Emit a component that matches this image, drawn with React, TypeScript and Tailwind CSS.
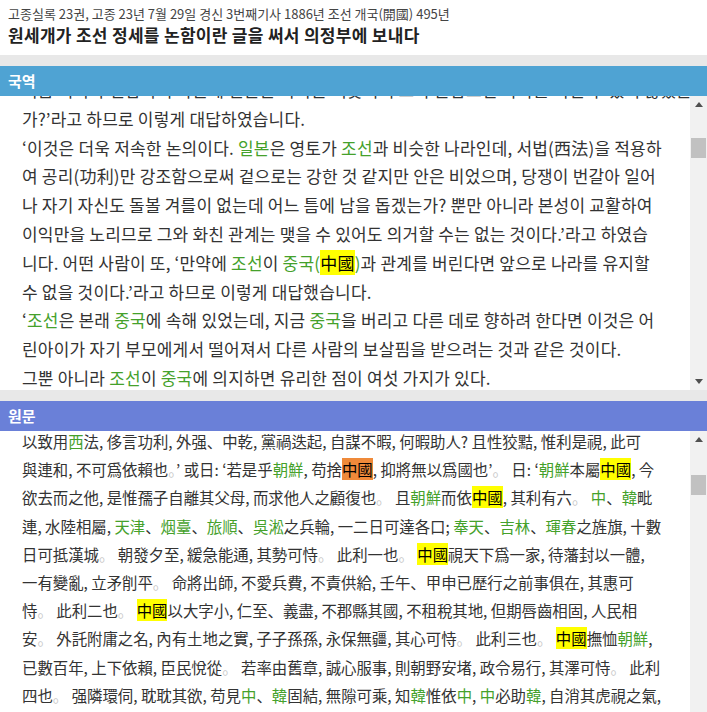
import React from "react";

type Seg = string | { t: string; c: "g" | "y" | "o" | "p" };

const G = (t: string): Seg => ({ t, c: "g" });
const Y = (t: string): Seg => ({ t, c: "y" });
const O = (t: string): Seg => ({ t, c: "o" });
const P: Seg = { t: "。", c: "p" };

function Line({ segs }: { segs: Seg[] }) {
  return (
    <div className="whitespace-nowrap">
      {segs.map((s, i) => {
        if (typeof s === "string") return <span key={i}>{s}</span>;
        if (s.c === "g") return <span key={i} className="text-[#45a12b]">{s.t}</span>;
        if (s.c === "y") return <span key={i} className="bg-[#ffff00] text-black">{s.t}</span>;
        if (s.c === "o") return <span key={i} className="bg-[#ef8a3a] text-black">{s.t}</span>;
        return <span key={i} className="text-[#c8c8c8]">{s.t}</span>;
      })}
    </div>
  );
}

const koLines: Seg[][] = [
  ["지금 외국과 연합하려 하는데 일본은 가까운 이웃이니 그와 손잡으면 나라를 지킬 수 있지 않겠는"],
  ["가?’라고 하므로 이렇게 대답하였습니다."],
  ["‘이것은 더욱 저속한 논의이다. ", G("일본"), "은 영토가 ", G("조선"), "과 비슷한 나라인데, 서법(西法)을 적용하"],
  ["여 공리(功利)만 강조함으로써 겉으로는 강한 것 같지만 안은 비었으며, 당쟁이 번갈아 일어"],
  ["나 자기 자신도 돌볼 겨를이 없는데 어느 틈에 남을 돕겠는가? 뿐만 아니라 본성이 교활하여"],
  ["이익만을 노리므로 그와 화친 관계는 맺을 수 있어도 의거할 수는 없는 것이다.’라고 하였습"],
  ["니다. 어떤 사람이 또, ‘만약에 ", G("조선"), "이 ", G("중국("), Y("中國"), G(")"), "과 관계를 버린다면 앞으로 나라를 유지할"],
  ["수 없을 것이다.’라고 하므로 이렇게 대답했습니다."],
  ["‘", G("조선"), "은 본래 ", G("중국"), "에 속해 있었는데, 지금 ", G("중국"), "을 버리고 다른 데로 향하려 한다면 이것은 어"],
  ["린아이가 자기 부모에게서 떨어져서 다른 사람의 보살핌을 받으려는 것과 같은 것이다."],
  ["그뿐 아니라 ", G("조선"), "이 ", G("중국"), "에 의지하면 유리한 점이 여섯 가지가 있다."],
];

const zhLines: Seg[][] = [
  ["以致用", G("西"), "法, 侈言功利, 外强、中乾, 黨禍迭起, 自謀不暇, 何暇助人? 且性狡黠, 惟利是視, 此可"],
  ["與連和, 不可爲依賴也", P, "’ 或日: ‘若是乎", G("朝鮮"), ", 苟捨", O("中國"), ", 抑將無以爲國也’", P, " 日: ‘", G("朝鮮"), "本屬", Y("中國"), ", 今"],
  ["欲去而之他, 是惟孺子自離其父母, 而求他人之顧復也", P, " 且", G("朝鮮"), "而依", Y("中國"), ", 其利有六", P, " ", G("中"), "、", G("韓"), "毗"],
  ["連, 水陸相屬, ", G("天津"), "、", G("烟臺"), "、", G("旅順"), "、", G("吳淞"), "之兵輪, 一二日可達各口; ", G("奉天"), "、", G("吉林"), "、", G("琿春"), "之旌旗, 十數"],
  ["日可抵漢城", P, " 朝發夕至, 緩急能通, 其勢可恃", P, " 此利一也", P, " ", Y("中國"), "視天下爲一家, 待藩封以一體,"],
  ["一有變亂, 立矛削平", P, " 命將出師, 不愛兵費, 不責供給, 壬午、甲申已歷行之前事俱在, 其惠可"],
  ["恃", P, " 此利二也", P, " ", Y("中國"), "以大字小, 仁至、義盡, 不郡縣其國, 不租稅其地, 但期唇齒相固, 人民相"],
  ["安", P, " 外託附庸之名, 內有土地之實, 子子孫孫, 永保無疆, 其心可恃", P, " 此利三也", P, " ", Y("中國"), "撫恤", G("朝鮮"), ","],
  ["已數百年, 上下依賴, 臣民悅從", P, " 若率由舊章, 誠心服事, 則朝野安堵, 政令易行, 其澤可恃", P, " 此利"],
  ["四也", P, " 强隣環伺, 耽耽其欲, 苟見", G("中"), "、", G("韓"), "固結, 無隙可乘, 知", G("韓"), "惟依", G("中"), ", ", G("中"), "必助", G("韓"), ", 自消其虎視之氣,"],
  ["則我國家之利也", P, " 此利五也"],
];

function ScrollBar({ thumbTop, showDown }: { thumbTop: number; showDown: boolean }) {
  return (
    <div className="w-[17px] shrink-0 bg-[#f1f1f1] flex flex-col items-center">
      <div className="h-[17px] w-full flex items-center justify-center">
        <svg width="8" height="5" viewBox="0 0 8 5">
          <polygon points="0,5 8,5 4,0" fill="#505050" />
        </svg>
      </div>
      <div style={{ height: thumbTop }} className="shrink-0" />
      <div className="w-[15px] h-[20px] bg-[#c1c1c1] shrink-0" />
      <div className="flex-1" />
      {showDown && (
        <div className="h-[17px] w-full flex items-center justify-center">
          <svg width="8" height="5" viewBox="0 0 8 5">
            <polygon points="0,0 8,0 4,5" fill="#505050" />
          </svg>
        </div>
      )}
    </div>
  );
}

export default function App() {
  return (
    <div className="w-[707px] h-[712px] overflow-hidden bg-white flex flex-col font-['Noto_Sans_CJK_KR','Noto_Sans',sans-serif]">
      <div className="h-[55px] shrink-0 px-2 pt-[4px]">
        <div className="text-[13px] leading-[20px] text-[#444]">
          고종실록 23권, 고종 23년 7월 29일 경신 3번째기사 1886년 조선 개국(開國) 495년
        </div>
        <div className="text-[17px] leading-[22px] tracking-[0.3px] font-bold text-[#222]">
          원세개가 조선 정세를 논함이란 글을 써서 의정부에 보내다
        </div>
      </div>
      <div className="h-[11px] shrink-0 bg-[#e8e8e8]" />
      <div className="h-[30px] shrink-0 bg-[#4fa3d3] text-white font-bold text-[15px] px-2 flex items-center">
        국역
      </div>
      <div className="h-[294px] shrink-0 flex">
        <div className="flex-1 overflow-hidden px-[22px]">
          <div className="-mt-[20px] text-[17px] tracking-[0.2px] leading-[28.8px] text-[#333]">
            {koLines.map((l, i) => (
              <Line key={i} segs={l} />
            ))}
          </div>
        </div>
        <ScrollBar thumbTop={25} showDown={true} />
      </div>
      <div className="h-[11px] shrink-0 bg-[#e8e8e8]" />
      <div className="h-[30px] shrink-0 bg-[#6a80d8] text-white font-bold text-[15px] px-2 flex items-center">
        원문
      </div>
      <div className="flex-1 flex min-h-0">
        <div className="flex-1 overflow-hidden px-[22px]">
          <div className="-mt-[4px] text-[15.4px] leading-[28.2px] text-[#333]">
            {zhLines.map((l, i) => (
              <Line key={i} segs={l} />
            ))}
          </div>
        </div>
        <ScrollBar thumbTop={27} showDown={false} />
      </div>
    </div>
  );
}
